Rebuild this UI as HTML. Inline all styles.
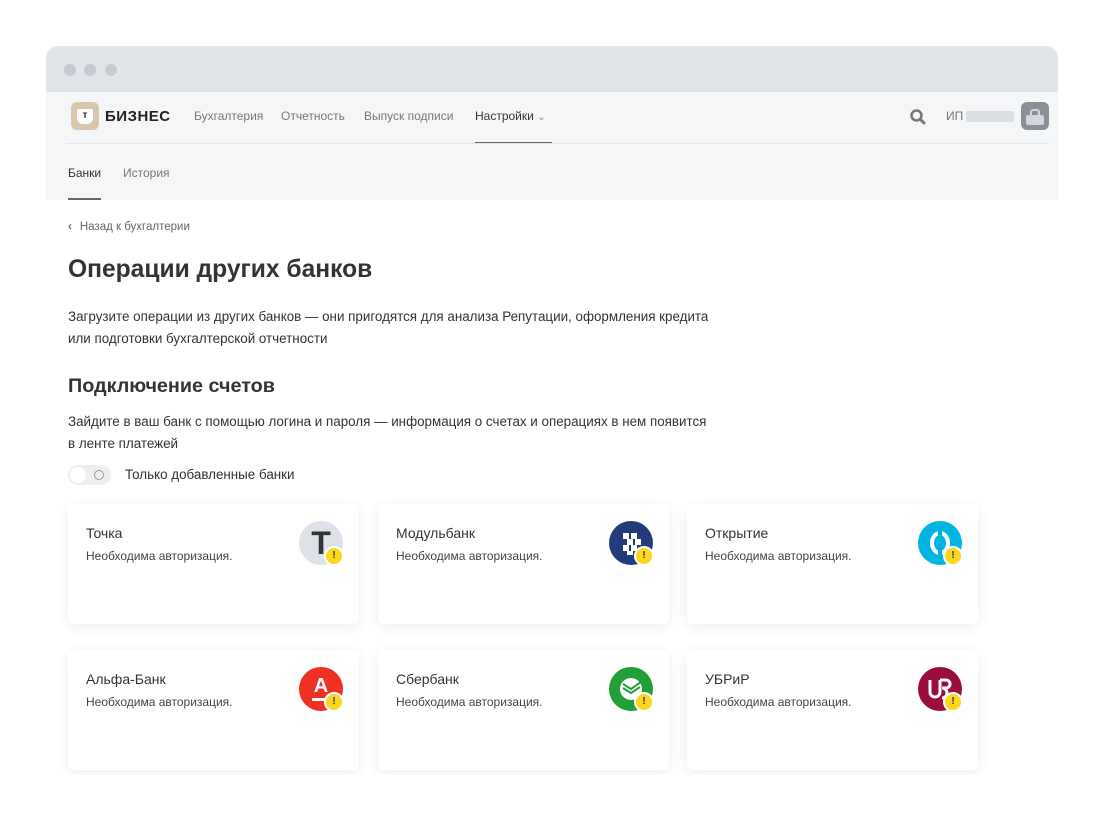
<!DOCTYPE html>
<html><head><meta charset="utf-8"><style>
*{margin:0;padding:0;box-sizing:border-box}
body{width:1104px;height:822px;background:#fff;font-family:"Liberation Sans","Noto Sans CJK SC",sans-serif;color:#333;position:relative;overflow:hidden}
.frame{position:absolute;left:46px;top:46px;width:1012px;height:729px;overflow:hidden;border-radius:12px 12px 0 0;background:#fff}
.bar{height:46px;background:#e1e4e8;position:relative}
.dot{position:absolute;top:18px;width:12px;height:12px;border-radius:50%;background:#c6cad0}
.nav{background:#f5f6f8;height:108px;position:relative}
.abs{position:absolute;white-space:nowrap}
.card{position:absolute;width:291px;height:120px;background:#fff;border-radius:6px;box-shadow:0 3px 14px rgba(0,0,0,.08)}
.card .t{position:absolute;left:18px;top:21px;font-size:14px;color:#333}
.card .s{position:absolute;left:18px;top:45px;font-size:12px;color:#444}
.ic{position:absolute;left:231px;top:17px;width:44px;height:44px;border-radius:50%;overflow:hidden}
.bd{position:absolute;left:256px;top:42px;width:20px;height:20px;border-radius:50%;background:#fcd720;border:2px solid #fff;font-size:10px;font-weight:bold;text-align:center;line-height:16px;color:#333}
</style></head><body>
<div class="frame">
 <div class="bar"><div class="dot" style="left:18px"></div><div class="dot" style="left:38px"></div><div class="dot" style="left:59px"></div></div>
 <div class="nav">
  <div class="abs" style="left:25px;top:10px;width:28px;height:28px;border-radius:6px;background:#d9c7ad"><div style="position:absolute;left:6px;top:7px;width:16px;height:15px;background:#fff;border-radius:2px 2px 6px 6px;font-size:10px;font-weight:bold;text-align:center;line-height:14px;color:#333">т</div></div>
  <div class="abs" style="left:59px;top:16px;font-size:15px;font-weight:bold;color:#222;letter-spacing:.5px">БИЗНЕС</div>
  <div class="abs" style="left:148px;top:17px;font-size:12px;color:#777">Бухгалтерия</div>
  <div class="abs" style="left:235px;top:17px;font-size:12px;color:#777">Отчетность</div>
  <div class="abs" style="left:318px;top:17px;font-size:12px;color:#777">Выпуск подписи</div>
  <div class="abs" style="left:429px;top:17px;font-size:12px;color:#333">Настройки <span style="color:#888;font-size:10px">&#8964;</span></div>
  <div class="abs" style="left:429px;top:50px;width:77px;height:2px;background:#666"></div>
  <div class="abs" style="left:20px;top:51px;width:983px;height:1px;background:#e6e7ea"></div>
  <svg class="abs" style="left:863px;top:16px" width="18" height="18" viewBox="0 0 18 18"><circle cx="7.5" cy="7.5" r="5" fill="none" stroke="#777" stroke-width="2.5"/><path d="M11 11l4 4" stroke="#777" stroke-width="3" stroke-linecap="round"/></svg>
  <div class="abs" style="left:900px;top:17px;font-size:12px;color:#777">ИП</div>
  <div class="abs" style="left:920px;top:19px;width:48px;height:11px;background:#dadde1;border-radius:2px"></div>
  <div class="abs" style="left:975px;top:10px;width:28px;height:28px;border-radius:6px;background:#8a9098"><div style="position:absolute;left:5px;top:13px;width:18px;height:10px;background:#d2d5d9;border-radius:2px"></div><div style="position:absolute;left:9px;top:7px;width:10px;height:8px;border:2px solid #d2d5d9;border-bottom:none;border-radius:3px 3px 0 0"></div></div>
  <div class="abs" style="left:22px;top:74px;font-size:12px;color:#333">Банки</div>
  <div class="abs" style="left:77px;top:74px;font-size:12px;color:#777">История</div>
  <div class="abs" style="left:22px;top:106px;width:33px;height:2px;background:#666"></div>
 </div>
 <div class="abs" style="left:22px;top:175px;font-size:11.5px;color:#666"><span style="font-weight:bold;margin-right:8px">&#8249;</span>Назад к бухгалтерии</div>
 <div class="abs" style="left:22px;top:210px;font-size:24.6px;font-weight:bold;color:#333">Операции других банков</div>
 <div class="abs" style="left:22px;top:260px;font-size:13.4px;line-height:22px;color:#333">Загрузите операции из других банков — они пригодятся для анализа Репутации, оформления кредита<br>или подготовки бухгалтерской отчетности</div>
 <div class="abs" style="left:22px;top:329px;font-size:19.8px;font-weight:bold;color:#333">Подключение счетов</div>
 <div class="abs" style="left:22px;top:365px;font-size:13.4px;line-height:22px;color:#333">Зайдите в ваш банк с помощью логина и пароля — информация о счетах и операциях в нем появится<br>в ленте платежей</div>
 <div class="abs" style="left:22px;top:419px;width:43px;height:20px;border-radius:10px;background:#eceef0"><div style="position:absolute;right:7px;top:5px;width:10px;height:10px;border-radius:50%;border:1.5px solid #999"></div><div style="position:absolute;left:2px;top:2px;width:16px;height:16px;border-radius:50%;background:#fff"></div></div>
 <div class="abs" style="left:79px;top:421px;font-size:13.4px;color:#333">Только добавленные банки</div>

 <div class="card" style="left:22px;top:458px"><div class="t">Точка</div><div class="s">Необходима авторизация.</div><div class="ic" style="background:#dde2e8;color:#333;font-size:32px;font-weight:bold;text-align:center;line-height:44px">T</div><div class="bd">!</div></div>
 <div class="card" style="left:332px;top:458px"><div class="t">Модульбанк</div><div class="s">Необходима авторизация.</div><div class="ic" style="background:#233b7a"><svg width="44" height="44"><g fill="#fff"><rect x="14" y="12" width="6" height="6"/><rect x="22" y="12" width="6" height="6"/><rect x="18" y="18" width="6" height="6"/><rect x="26" y="18" width="6" height="6"/><rect x="14" y="24" width="6" height="6"/><rect x="22" y="24" width="6" height="6"/><rect x="18" y="30" width="6" height="4"/></g></svg></div><div class="bd">!</div></div>
 <div class="card" style="left:641px;top:458px"><div class="t">Открытие</div><div class="s">Необходима авторизация.</div><div class="ic" style="background:#00b5e2"><svg width="44" height="44"><ellipse cx="22" cy="22" rx="8" ry="10" fill="none" stroke="#fff" stroke-width="4"/><rect x="20" y="10" width="4" height="24" fill="#00b5e2"/></svg></div><div class="bd">!</div></div>

 <div class="card" style="left:22px;top:604px"><div class="t">Альфа-Банк</div><div class="s">Необходима авторизация.</div><div class="ic" style="background:#ef3124;color:#fff;font-size:20px;font-weight:bold;text-align:center;line-height:38px">A<div style="position:absolute;left:13px;top:31px;width:18px;height:3px;background:#fff"></div></div><div class="bd">!</div></div>
 <div class="card" style="left:332px;top:604px"><div class="t">Сбербанк</div><div class="s">Необходима авторизация.</div><div class="ic" style="background:#21a038"><svg width="44" height="44"><circle cx="22" cy="22" r="11" fill="#fff"/><path d="M14 17l8 5 10-7M14 21l8 5 9-6" stroke="#21a038" stroke-width="2" fill="none"/></svg></div><div class="bd">!</div></div>
 <div class="card" style="left:641px;top:604px"><div class="t">УБРиР</div><div class="s">Необходима авторизация.</div><div class="ic" style="background:#9b0d3c"><svg width="44" height="44"><path d="M12 13v12a5 5 0 0 0 10 0V13M22 13h6a4 4 0 0 1 0 8h-4a5 5 0 0 1 0 10" stroke="#fff" stroke-width="3" fill="none"/></svg></div><div class="bd">!</div></div>
</div>
</body></html>
